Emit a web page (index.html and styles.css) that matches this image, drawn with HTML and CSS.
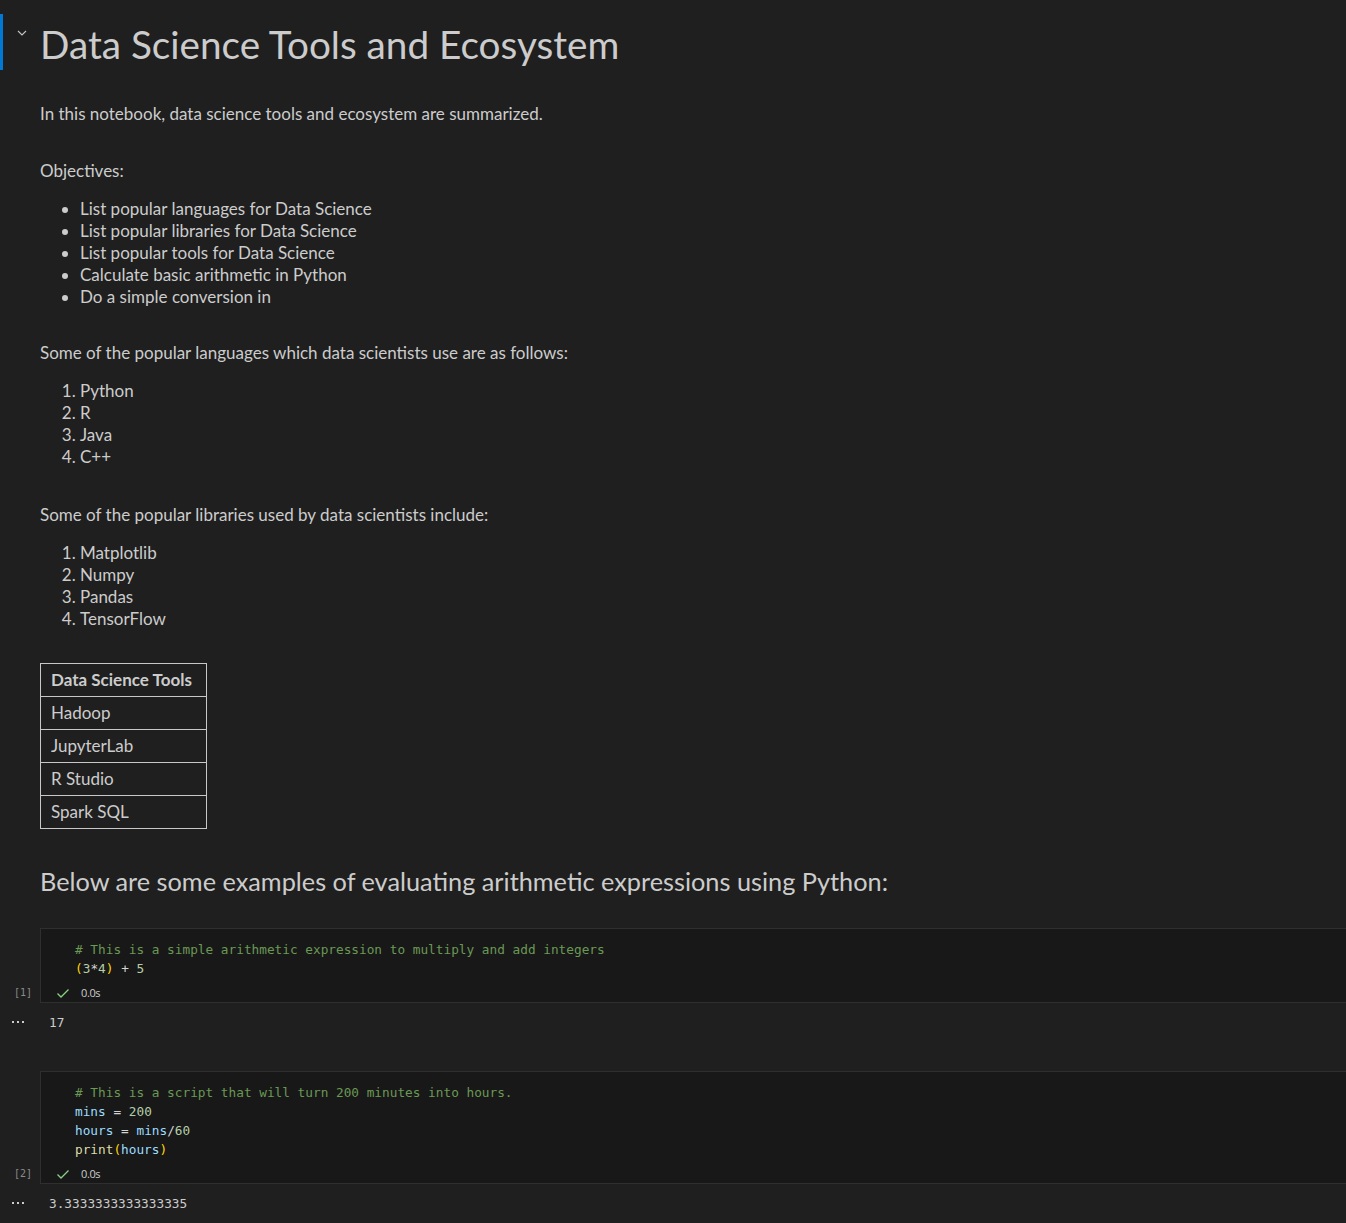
FILE: index.html
```html
<!DOCTYPE html>
<html>
<head>
<meta charset="utf-8">
<title>Data Science Tools and Ecosystem</title>
<link rel="stylesheet" href="styles.css">
</head>
<body>
<div class="notebook">
  <div class="md-cell title-cell">
    <div class="focus-bar"></div>
    <svg class="chevron" width="12" height="12" viewBox="0 0 12 12"><path d="M2 4 L6 8 L10 4" fill="none" stroke="#c5c5c5" stroke-width="1.1"/></svg>
    <h1 class="title">Data Science Tools and Ecosystem</h1>
  </div>

  <div class="md-cell intro">
    <p class="para">In this notebook, data science tools and ecosystem are summarized.</p>
  </div>

  <div class="md-cell block objectives">
    <p class="para">Objectives:</p>
    <ul class="list bullets">
      <li>List popular languages for Data Science</li>
      <li>List popular libraries for Data Science</li>
      <li>List popular tools for Data Science</li>
      <li>Calculate basic arithmetic in Python</li>
      <li>Do a simple conversion in</li>
    </ul>
  </div>

  <div class="md-cell block languages">
    <p class="para">Some of the popular languages which data scientists use are as follows:</p>
    <ol class="list numbers">
      <li>Python</li>
      <li>R</li>
      <li>Java</li>
      <li>C++</li>
    </ol>
  </div>

  <div class="md-cell block libraries">
    <p class="para">Some of the popular libraries used by data scientists include:</p>
    <ol class="list numbers">
      <li>Matplotlib</li>
      <li>Numpy</li>
      <li>Pandas</li>
      <li>TensorFlow</li>
    </ol>
  </div>

  <div class="md-cell block table-block">
    <table class="tools">
      <thead><tr><th>Data Science Tools</th></tr></thead>
      <tbody>
        <tr><td>Hadoop</td></tr>
        <tr><td>JupyterLab</td></tr>
        <tr><td>R Studio</td></tr>
        <tr><td>Spark SQL</td></tr>
      </tbody>
    </table>
  </div>

  <div class="md-cell block heading-block">
    <h2 class="subtitle">Below are some examples of evaluating arithmetic expressions using Python:</h2>
  </div>

  <div class="code-cell first">
    <div class="code-row">
      <div class="gutter"><span class="exec">[1]</span></div>
      <div class="code-box">
        <pre class="code"><span class="c"># This is a simple arithmetic expression to multiply and add integers</span>
<span class="p">(</span><span class="n">3</span><span class="o">*</span><span class="n">4</span><span class="p">)</span> <span class="o">+</span> <span class="n">5</span></pre>
        <div class="status"><svg class="check" width="14" height="14" viewBox="0 0 14 14"><path d="M1.5 7.5 L5 11 L12.5 3.5" fill="none" stroke="#89d185" stroke-width="1.3"/></svg><span>0.0s</span></div>
      </div>
    </div>
    <div class="output-row">
      <div class="gutter"><svg class="dots" width="16" height="4" viewBox="0 0 16 4"><rect x="0" y="1" width="2" height="2" fill="#cccccc"/><rect x="5" y="1" width="2" height="2" fill="#cccccc"/><rect x="10" y="1" width="2" height="2" fill="#cccccc"/></svg></div>
      <div class="output">17</div>
    </div>
  </div>

  <div class="code-cell second">
    <div class="code-row">
      <div class="gutter"><span class="exec">[2]</span></div>
      <div class="code-box">
        <pre class="code"><span class="c"># This is a script that will turn 200 minutes into hours.</span>
<span class="v">mins</span> <span class="o">=</span> <span class="n">200</span>
<span class="v">hours</span> <span class="o">=</span> <span class="v">mins</span><span class="o">/</span><span class="n">60</span>
<span class="f">print</span><span class="p">(</span><span class="v">hours</span><span class="p">)</span></pre>
        <div class="status"><svg class="check" width="14" height="14" viewBox="0 0 14 14"><path d="M1.5 7.5 L5 11 L12.5 3.5" fill="none" stroke="#89d185" stroke-width="1.3"/></svg><span>0.0s</span></div>
      </div>
    </div>
    <div class="output-row">
      <div class="gutter"><svg class="dots" width="16" height="4" viewBox="0 0 16 4"><rect x="0" y="1" width="2" height="2" fill="#cccccc"/><rect x="5" y="1" width="2" height="2" fill="#cccccc"/><rect x="10" y="1" width="2" height="2" fill="#cccccc"/></svg></div>
      <div class="output">3.3333333333333335</div>
    </div>
  </div>
</div>
</body>
</html>
```

FILE: styles.css
```css
html, body {
  margin: 0;
  padding: 0;
  background: #1f1f1f;
  overflow: hidden;
}

body {
  font-family: Lato, "Open Sans", sans-serif;
  color: #cccccc;
  font-size: 17px;
  line-height: 22px;
}

.notebook {
  padding-top: 14px;
}

.md-cell {
  position: relative;
  padding-left: 40px;
}

.title-cell {
  height: 56px;
}

.focus-bar {
  position: absolute;
  left: 0;
  top: 0;
  width: 3px;
  height: 56px;
  background: #0078d4;
}

.chevron {
  position: absolute;
  left: 16px;
  top: 13px;
}

.title {
  margin: 0;
  padding-top: 5px;
  font-weight: 400;
  font-size: 38.7px;
  line-height: 50px;
  color: #cccccc;
}

.intro {
  margin-top: 33px;
}

.block {
  margin-top: 35px;
}

.objectives {
  margin-top: 35px;
}

.languages {
  margin-top: 34px;
}

.libraries {
  margin-top: 36px;
}

.table-block {
  margin-top: 33px;
}

.heading-block {
  margin-top: 35px;
}

.para {
  margin: 0;
}

.list {
  margin: 16px 0 0 0;
  padding-left: 40px;
}

.tools {
  border-collapse: collapse;
  border: 1px solid #c8c8c8;
}

.tools th, .tools td {
  border: 1px solid #c8c8c8;
  text-align: left;
  padding: 5px 10px 5px 10px;
  line-height: 22px;
  height: 22px;
}

.tools th {
  font-weight: 700;
  padding-right: 14px;
}

.subtitle {
  margin: 0;
  font-weight: 400;
  font-size: 25.3px;
  line-height: 34px;
  color: #cccccc;
}

.code-cell.first {
  margin-top: 30px;
}

.code-row {
  display: flex;
}

.gutter {
  width: 40px;
  flex: none;
  position: relative;
}

.exec {
  position: absolute;
  left: 14px;
  bottom: 4px;
  font-family: "DejaVu Sans Mono", monospace;
  font-size: 10px;
  line-height: 12px;
  color: #8b8b8b;
}

.code-box {
  flex: 1;
  margin-right: -4px;
  background: #181818;
  border: 1px solid #2f2f2f;
  padding: 11px 0 0 0;
}

.code {
  margin: 0 0 0 34px;
  font-family: "DejaVu Sans Mono", monospace;
  font-size: 12.75px;
  line-height: 19px;
  color: #d4d4d4;
}

.c { color: #6a9955; }
.p { color: #ffd700; }
.n { color: #b5cea8; }
.o { color: #d4d4d4; }
.v { color: #9cdcfe; }
.f { color: #dcdcaa; }

.status {
  display: flex;
  align-items: center;
  height: 19px;
  margin-top: 5px;
  padding-left: 15px;
  font-family: "Open Sans", sans-serif;
  font-size: 11px;
  letter-spacing: -0.4px;
  color: #cccccc;
}

.check {
  margin-right: 11px;
}

.output-row {
  display: flex;
  height: 68px;
}

.second .output-row {
  height: 39px;
}

.dots {
  position: absolute;
  left: 12px;
  top: 17px;
}

.output {
  padding-top: 10px;
  padding-left: 9px;
  font-family: "DejaVu Sans Mono", monospace;
  font-size: 12.75px;
  line-height: 20px;
  color: #cccccc;
}
```
